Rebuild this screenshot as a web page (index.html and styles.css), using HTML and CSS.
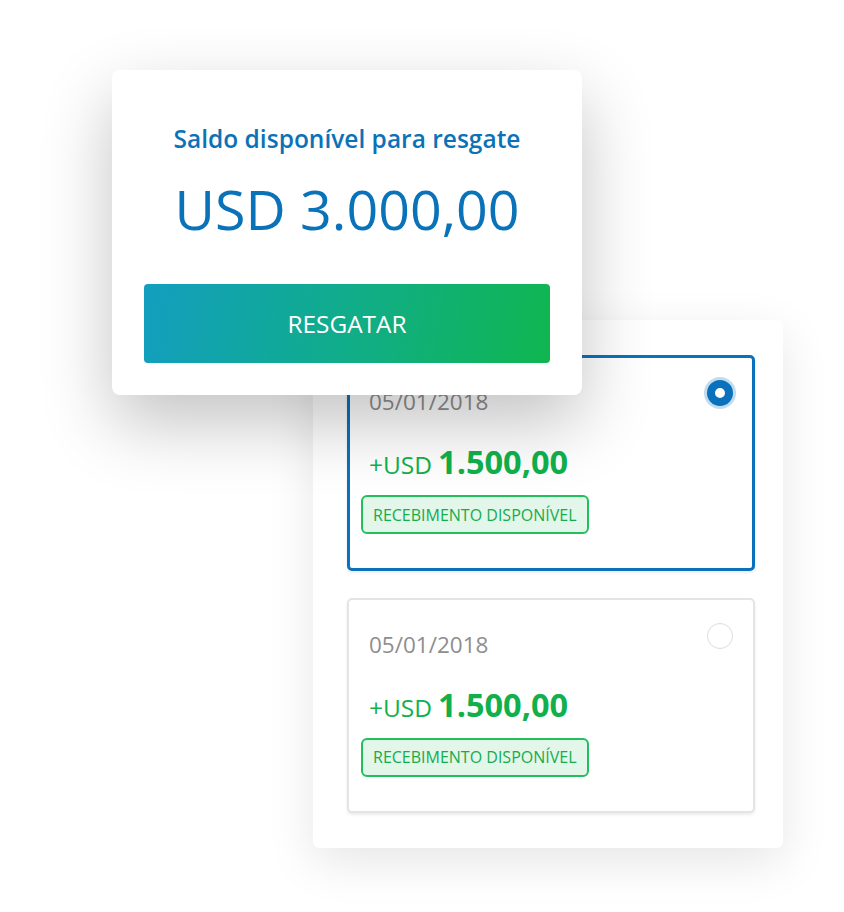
FILE: index.html
```html
<!DOCTYPE html>
<html lang="pt-BR">
<head>
<meta charset="utf-8">
<title>Resgate</title>
<link rel="stylesheet" href="styles.css">
</head>
<body>
<div class="stage">
  <section class="list-card">
    <div class="opt opt--selected">
      <div class="opt-head">
        <span class="opt-date">05/01/2018</span>
        <span class="radio radio--on"></span>
      </div>
      <div class="opt-amount">
        <span class="cur">+USD</span>
        <span class="val">1.500,00</span>
      </div>
      <span class="badge">RECEBIMENTO DISPONÍVEL</span>
    </div>
    <div class="opt">
      <div class="opt-head">
        <span class="opt-date">05/01/2018</span>
        <span class="radio"></span>
      </div>
      <div class="opt-amount">
        <span class="cur">+USD</span>
        <span class="val">1.500,00</span>
      </div>
      <span class="badge">RECEBIMENTO DISPONÍVEL</span>
    </div>
  </section>

  <section class="balance-card">
    <h1 class="balance-title">Saldo disponível para resgate</h1>
    <div class="balance-value">USD 3.000,00</div>
    <button class="btn">RESGATAR</button>
  </section>
</div>
</body>
</html>
```

FILE: styles.css
```css
* { box-sizing: border-box; }
html, body {
  margin: 0;
  padding: 0;
  background: #ffffff;
}
body {
  font-family: "Open Sans", "Noto Sans", sans-serif;
}
.stage {
  position: relative;
  width: 844px;
  height: 912px;
  overflow: hidden;
  padding-top: 320px;
  padding-left: 313px;
}

/* back card with options */
.list-card {
  width: 470px;
  height: 528px;
  background: #fff;
  border-radius: 6px;
  box-shadow: 0 14px 48px rgba(0, 0, 0, 0.10);
  padding: 35px 28px 35px 34px;
  display: flex;
  flex-direction: column;
  gap: 27px;
}
.opt {
  height: 216px;
  border: 2px solid #e4e4e4;
  border-radius: 5px;
  background: #fff;
  box-shadow: 0 2px 3px rgba(0, 0, 0, 0.08);
  padding: 23px 20px 0 12px;
  display: flex;
  flex-direction: column;
  align-items: flex-start;
}
.opt--selected {
  border: 3px solid #0a72bd;
  padding: 22px 19px 0 11px;
}
.opt-head {
  display: flex;
  justify-content: space-between;
  align-items: flex-start;
  align-self: stretch;
}
.opt-date {
  margin-top: 6px;
  margin-left: 8px;
  font-size: 22.5px;
  color: #8e8e8e;
  line-height: 31px;
}
.radio {
  width: 26px;
  height: 26px;
  border-radius: 50%;
  border: 1.5px solid #dddddd;
  background: #fff;
}
.radio--on {
  border: 8.5px solid #0a72bd;
  box-shadow: 0 0 0 3px rgba(10, 114, 189, 0.25);
}
.opt-amount {
  display: flex;
  align-items: baseline;
  gap: 6px;
  margin-top: 23px;
  margin-left: 8px;
  color: #10b14c;
  line-height: 44px;
}
.cur {
  font-size: 24.5px;
}
.val {
  font-size: 32.5px;
  font-weight: 700;
}
.badge {
  margin-top: 8px;
  height: 39px;
  padding: 0 10px;
  display: flex;
  align-items: center;
  border: 2px solid #22c05c;
  border-radius: 6px;
  background: #e3f6ea;
  color: #13ad4d;
  font-size: 16px;
}

/* front card */
.balance-card {
  position: absolute;
  left: 112px;
  top: 70px;
  width: 470px;
  height: 325px;
  background: #fff;
  border-radius: 8px;
  box-shadow: 0 28px 70px rgba(0, 0, 0, 0.24);
  padding: 52px 32px 32px;
  display: flex;
  flex-direction: column;
  align-items: center;
}
.balance-title {
  margin: 0;
  font-size: 24.5px;
  font-weight: 600;
  color: #0b72b8;
  line-height: 34px;
}
.balance-value {
  margin-top: 15px;
  font-size: 55.5px;
  font-weight: 400;
  color: #0a72b8;
  line-height: 76px;
}
.btn {
  margin-top: 37px;
  width: 406px;
  height: 79px;
  border: 0;
  border-radius: 4px;
  background: linear-gradient(100deg, #129ebf 0%, #10ad8a 50%, #10b650 100%);
  color: #fff;
  font-family: "Open Sans", "Noto Sans", sans-serif;
  font-size: 24.4px;
  font-weight: 400;
  padding: 0;
}
```
